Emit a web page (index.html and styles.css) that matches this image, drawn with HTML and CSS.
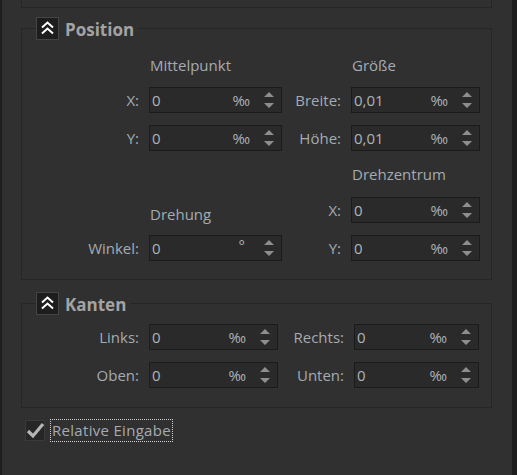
FILE: index.html
```html
<!DOCTYPE html>
<html lang="de">
<head>
<meta charset="utf-8">
<title>Position</title>
<link rel="stylesheet" href="styles.css">
</head>
<body>
<div class="app">
  <div class="prev"></div>

  <fieldset class="group pos">
    <legend>
      <span class="collapse"><svg width="23" height="23" viewBox="0 0 23 23"><path d="M6 10.5 L11.5 5.5 L17 10.5 M6 16.5 L11.5 11.5 L17 16.5" fill="none" stroke="#ffffff" stroke-width="2"/></svg></span>
      <span class="title">Position</span>
    </legend>
    <div class="grid pos-grid">
      <div></div><div class="head">Mittelpunkt</div><div></div><div class="head">Größe</div>

      <span class="lbl">X:</span>
      <div class="spin"><span class="val">0</span><span class="unit">‰</span><svg class="arr" width="12" height="18" viewBox="0 0 12 18"><path d="M1 6 L6 1 L11 6Z M1 12 L6 17 L11 12Z" fill="#8e8e8e"/></svg></div>
      <span class="lbl">Breite:</span>
      <div class="spin"><span class="val">0,01</span><span class="unit">‰</span><svg class="arr" width="12" height="18" viewBox="0 0 12 18"><path d="M1 6 L6 1 L11 6Z M1 12 L6 17 L11 12Z" fill="#8e8e8e"/></svg></div>

      <span class="lbl">Y:</span>
      <div class="spin"><span class="val">0</span><span class="unit">‰</span><svg class="arr" width="12" height="18" viewBox="0 0 12 18"><path d="M1 6 L6 1 L11 6Z M1 12 L6 17 L11 12Z" fill="#8e8e8e"/></svg></div>
      <span class="lbl">Höhe:</span>
      <div class="spin"><span class="val">0,01</span><span class="unit">‰</span><svg class="arr" width="12" height="18" viewBox="0 0 12 18"><path d="M1 6 L6 1 L11 6Z M1 12 L6 17 L11 12Z" fill="#8e8e8e"/></svg></div>

      <div></div><div></div><div></div><div class="head">Drehzentrum</div>

      <div></div><div class="head low">Drehung</div>
      <span class="lbl">X:</span>
      <div class="spin"><span class="val">0</span><span class="unit">‰</span><svg class="arr" width="12" height="18" viewBox="0 0 12 18"><path d="M1 6 L6 1 L11 6Z M1 12 L6 17 L11 12Z" fill="#8e8e8e"/></svg></div>

      <span class="lbl">Winkel:</span>
      <div class="spin"><span class="val">0</span><span class="unit deg">°</span><svg class="arr" width="12" height="18" viewBox="0 0 12 18"><path d="M1 6 L6 1 L11 6Z M1 12 L6 17 L11 12Z" fill="#8e8e8e"/></svg></div>
      <span class="lbl">Y:</span>
      <div class="spin"><span class="val">0</span><span class="unit">‰</span><svg class="arr" width="12" height="18" viewBox="0 0 12 18"><path d="M1 6 L6 1 L11 6Z M1 12 L6 17 L11 12Z" fill="#8e8e8e"/></svg></div>
    </div>
  </fieldset>

  <fieldset class="group edges">
    <legend>
      <span class="collapse"><svg width="23" height="23" viewBox="0 0 23 23"><path d="M6 10.5 L11.5 5.5 L17 10.5 M6 16.5 L11.5 11.5 L17 16.5" fill="none" stroke="#ffffff" stroke-width="2"/></svg></span>
      <span class="title">Kanten</span>
    </legend>
    <div class="grid edge-grid">
      <span class="lbl">Links:</span>
      <div class="spin"><span class="val">0</span><span class="unit">‰</span><svg class="arr" width="12" height="18" viewBox="0 0 12 18"><path d="M1 6 L6 1 L11 6Z M1 12 L6 17 L11 12Z" fill="#8e8e8e"/></svg></div>
      <span class="lbl">Rechts:</span>
      <div class="spin"><span class="val">0</span><span class="unit">‰</span><svg class="arr" width="12" height="18" viewBox="0 0 12 18"><path d="M1 6 L6 1 L11 6Z M1 12 L6 17 L11 12Z" fill="#8e8e8e"/></svg></div>

      <span class="lbl">Oben:</span>
      <div class="spin"><span class="val">0</span><span class="unit">‰</span><svg class="arr" width="12" height="18" viewBox="0 0 12 18"><path d="M1 6 L6 1 L11 6Z M1 12 L6 17 L11 12Z" fill="#8e8e8e"/></svg></div>
      <span class="lbl">Unten:</span>
      <div class="spin"><span class="val">0</span><span class="unit">‰</span><svg class="arr" width="12" height="18" viewBox="0 0 12 18"><path d="M1 6 L6 1 L11 6Z M1 12 L6 17 L11 12Z" fill="#8e8e8e"/></svg></div>
    </div>
  </fieldset>

  <div class="check-row">
    <span class="checkbox"><svg width="20" height="21" viewBox="0 0 20 21"><path d="M3 11 L8 16 L18 4" fill="none" stroke="#b5b5b5" stroke-width="3.2"/></svg></span>
    <span class="check-label">Relative Eingabe</span>
  </div>
</div>
</body>
</html>
```

FILE: styles.css
```css
html, body {
  margin: 0;
  padding: 0;
  height: 100%;
  background: #1e1e1e;
}

body {
  font-family: "Open Sans", "Noto Sans", "DejaVu Sans", sans-serif;
  font-size: 15px;
  color: #a4abb2;
}

.app {
  box-sizing: border-box;
  height: 475px;
  margin-left: 2px;
  margin-right: 5px;
  background: #303030;
  padding: 0 20px 0 19px;
  display: flex;
  flex-direction: column;
}

.prev {
  height: 7px;
  border: 1px solid #262626;
  border-top: none;
}

.group {
  margin: 0;
  padding: 0;
  min-width: 0;
  border: 1px solid #262626;
}

.group legend {
  display: flex;
  align-items: center;
  gap: 6px;
  height: 23px;
  margin: 2px 0 0 14px;
  padding: 0 4px 0 0;
}

.collapse {
  box-sizing: border-box;
  width: 23px;
  height: 23px;
  background: #1d1d1d;
  border: 1px solid #444444;
  display: flex;
  align-items: center;
  justify-content: center;
}

.collapse svg {
  display: block;
  margin: -1px;
}

.title {
  font-weight: 700;
  font-size: 17px;
  line-height: 21px;
  color: #a3a3a3;
  padding-top: 2px;
}

.pos {
  margin-top: 9px;
  padding: 15px 11px 18px 0;
}

.edges {
  margin-top: 12px;
  padding: 9px 11px 19px 0;
}

.grid {
  display: grid;
  column-gap: 10px;
  row-gap: 12px;
  align-items: center;
}

.pos-grid {
  grid-template-columns: 117px 133px 49px 129px;
  grid-template-rows: 20px 26px 26px 22px 26px 26px;
}

.edge-grid {
  grid-template-columns: 117px 129px 56px 125px;
  grid-template-rows: 26px 26px;
}

.head {
  line-height: 20px;
  padding-left: 1px;
  white-space: nowrap;
}

.head.low {
  align-self: end;
  margin-bottom: -1px;
}

.lbl {
  text-align: right;
  white-space: nowrap;
  line-height: 20px;
}

.spin {
  box-sizing: border-box;
  height: 26px;
  display: flex;
  align-items: center;
  background: #2a2a2a;
  border: 1px solid #1b1b1b;
  color: #adb3b9;
}

.val {
  flex: 1;
  padding-left: 2px;
  line-height: 20px;
}

.unit {
  margin-right: 13px;
  line-height: 20px;
}

.unit.deg {
  margin-right: 18px;
  margin-top: -6px;
}

.arr {
  display: block;
  margin-right: 6px;
}

.check-row {
  margin-top: 11px;
  display: flex;
  align-items: center;
  gap: 5px;
  padding-left: 4px;
}

.checkbox {
  box-sizing: border-box;
  width: 20px;
  height: 21px;
  background: #262626;
  border: 1px solid #3a3a3a;
  position: relative;
}

.checkbox svg {
  position: absolute;
  left: -1px;
  top: -1px;
}

.check-label {
  border: 1px dotted #d0d0d0;
  line-height: 21px;
  padding: 0 1px;
  color: #a4abb2;
  letter-spacing: 0.3px;
}
```
